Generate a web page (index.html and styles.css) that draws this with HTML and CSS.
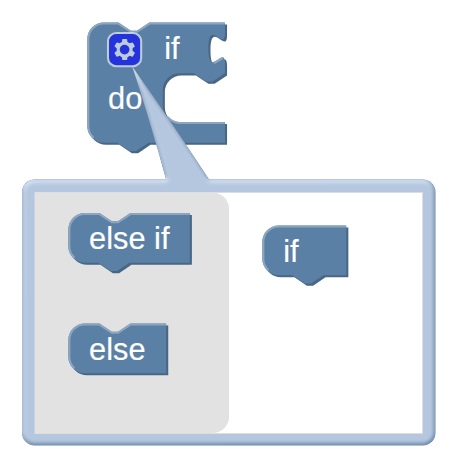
FILE: index.html
```html
<!DOCTYPE html>
<html lang="en">
<head>
<meta charset="utf-8">
<title>Block mutator</title>
<link rel="stylesheet" href="styles.css">
</head>
<body>
<svg class="workspace" width="459" height="465" viewBox="0 0 459 465">
  <defs>
    <filter id="emboss" x="-5%" y="-5%" width="110%" height="110%">
      <feGaussianBlur in="SourceAlpha" stdDeviation="2.07" result="blur"/>
      <feSpecularLighting in="blur" surfaceScale="1" specularConstant=".5" specularExponent="10" lighting-color="white" result="specOut">
        <fePointLight x="-10000" y="-20000" z="40000"/>
      </feSpecularLighting>
      <feComposite in="specOut" in2="SourceAlpha" operator="in" result="specOut"/>
      <feComposite in="SourceGraphic" in2="specOut" operator="arithmetic" k1="0" k2="1" k3="1" k4="0"/>
    </filter>
    <path id="if-do-body" d="M0,8 A8,8 0 0,1 8,0 H15 l6,4 3,0 6,-4 H66.4 v5 c0,10 -8,-8 -8,7.5 s8,-2.5 8,7.5 v4.5 l-6,4 -3,0 -6,-4 h-7 a8,8 0 0,0 -8,8 v7.5 a8,8 0 0,0 8,8 H66.4 v10 H29.5 l-6,4 -3,0 -6,-4 H8 a8,8 0 0,1 -8,-8 z"/>
    <path id="else-if" d="M0,8 A8,8 0 0,1 8,0 H15 l6,4 3,0 6,-4 H58.6 v24 H29.5 l-6,4 -3,0 -6,-4 H8 a8,8 0 0,1 -8,-8 z"/>
    <path id="else" d="M0,8 A8,8 0 0,1 8,0 H15 l6,4 3,0 6,-4 H47.2 v24 H8 a8,8 0 0,1 -8,-8 z"/>
    <path id="if" d="M0,8 A8,8 0 0,1 8,0 H40.5 v24 H29.5 l-6,4 -3,0 -6,-4 H8 a8,8 0 0,1 -8,-8 z"/>
  </defs>

  <g transform="translate(87.3 22.5) scale(2.0736)">
    <use href="#if-do-body" class="dark" x="1" y="1"/>
    <use href="#if-do-body" class="fill"/>
    <path class="light" d="M2.7,55.3 A7.5,7.5 0 0,1 .5,50 V8 A7.5,7.5 0 0,1 8,.5 H15 l6,4 3,0 6,-4 H65.9 M61.4,19.4 l3.7,-2.1 M38.8,45.7 A8.5,8.5 0 0,0 44.4,48.5 H65.9"/>
    <text class="label" x="37.1" y="17.7">if</text>
    <text class="label" x="10" y="41.8">do</text>
  </g>

  <g filter="url(#emboss)" class="fill">
    <path d="M132,66 Q150,120 167,183 H211.5 Q176,129 132,66 z"/>
    <rect x="22" y="179.5" width="413.5" height="266" rx="12.4"/>
  </g>

  <g class="icon" transform="translate(108 33) scale(2.0736)">
    <rect class="icon-shape" width="16" height="16" rx="4"/>
    <path class="icon-symbol" d="m4.203,7.296 0,1.368 -0.92,0.677 -0.11,0.41 0.9,1.559 0.41,0.11 1.043,-0.457 1.187,0.683 0.127,1.134 0.3,0.3 1.8,0 0.3,-0.299 0.127,-1.138 1.185,-0.682 1.046,0.458 0.409,-0.11 0.9,-1.559 -0.11,-0.41 -0.92,-0.677 0,-1.366 0.92,-0.677 0.11,-0.41 -0.9,-1.559 -0.409,-0.109 -1.046,0.458 -1.185,-0.682 -0.127,-1.138 -0.3,-0.299 -1.8,0 -0.3,0.3 -0.126,1.135 -1.187,0.682 -1.043,-0.457 -0.41,0.11 -0.899,1.559 0.108,0.409z"/>
    <circle class="icon-hub" r="2.35" cx="8" cy="8"/>
  </g>

  <rect class="canvas" x="35" y="192.5" width="387.5" height="241"/>
  <path class="flyout" d="M35,192.5 H212.5 a16.6,16.6 0 0,1 16.6,16.6 V416.5 a16.6,16.6 0 0,1 -16.6,16.6 H35 z"/>

  <g transform="translate(68.3 213) scale(2.0736)">
    <use href="#else-if" class="dark" x="1" y="1"/>
    <use href="#else-if" class="fill"/>
    <path class="light" d="M2.7,21.3 A7.5,7.5 0 0,1 .5,16 V8 A7.5,7.5 0 0,1 8,.5 H15 l6,4 3,0 6,-4 H58.1"/>
    <text class="label" x="10" y="17.5">else if</text>
  </g>
  <g transform="translate(68.3 323.5) scale(2.0736)">
    <use href="#else" class="dark" x="1" y="1"/>
    <use href="#else" class="fill"/>
    <path class="light" d="M2.7,21.3 A7.5,7.5 0 0,1 .5,16 V8 A7.5,7.5 0 0,1 8,.5 H15 l6,4 3,0 6,-4 H46.7"/>
    <text class="label" x="10" y="17.7">else</text>
  </g>
  <g transform="translate(262.3 225.5) scale(2.0736)">
    <use href="#if" class="dark" x="1" y="1"/>
    <use href="#if" class="fill"/>
    <path class="light" d="M2.7,21.3 A7.5,7.5 0 0,1 .5,16 V8 A7.5,7.5 0 0,1 8,.5 H40"/>
    <text class="label" x="10.1" y="17.7">if</text>
  </g>
</svg>
</body>
</html>
```
FILE: styles.css
```css
body {
  margin: 0;
  background: #fff;
  overflow: hidden;
}

.workspace {
  display: block;
}

.fill {
  fill: #5b80a5;
}

.dark {
  fill: #496684;
}

.light {
  fill: none;
  stroke: #8ca6c0;
  stroke-width: 1;
  stroke-linecap: round;
}

.label {
  fill: #fff;
  stroke: #fff;
  stroke-width: .08;
  font-family: "Liberation Sans", Arial, sans-serif;
  font-size: 14.85px;
}

.icon {
  opacity: .6;
}

.icon-shape {
  fill: #00f;
  stroke: #fff;
  stroke-width: 1;
}

.icon-symbol {
  fill: #fff;
}

.icon-hub {
  fill: #00f;
}

.canvas {
  fill: #fff;
  stroke: #ddd;
  stroke-width: 1;
}

.flyout {
  fill: #e2e2e2;
}
```
